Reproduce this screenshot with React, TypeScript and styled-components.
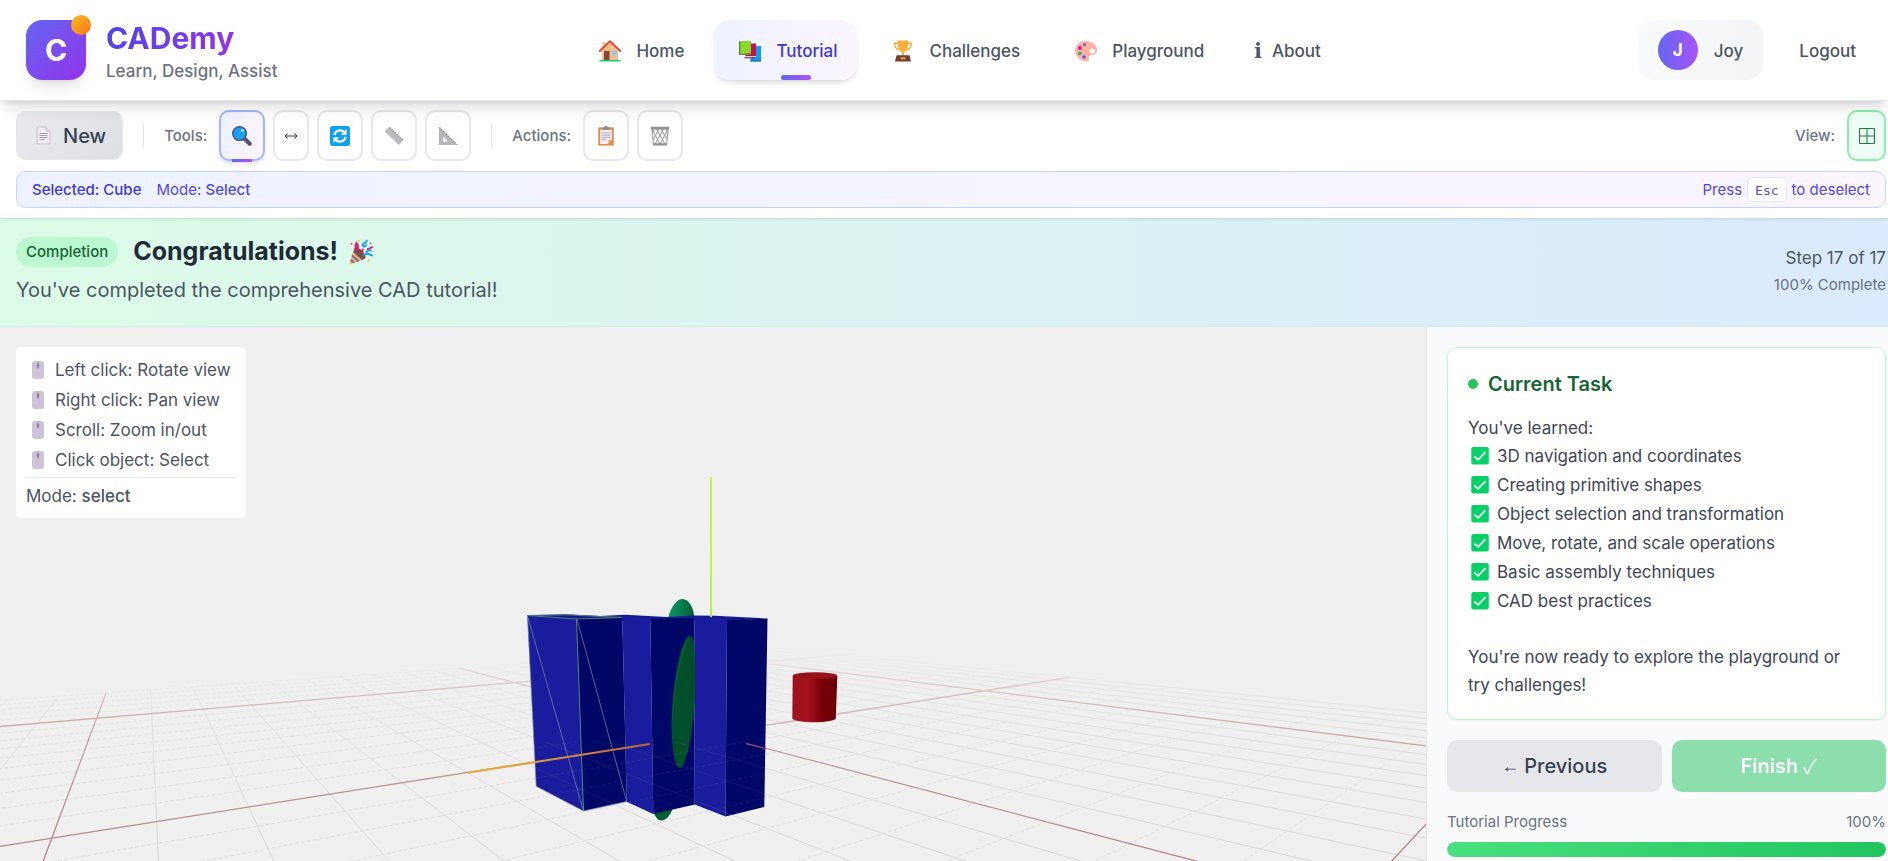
import React from 'react';
import styled, { createGlobalStyle, css } from 'styled-components';

const GlobalStyle = createGlobalStyle`
  *, *::before, *::after { box-sizing: border-box; }
  body {
    margin: 0;
    background: #ffffff;
    color: #374151;
    font-family: Inter, "Liberation Sans", sans-serif;
    font-size: 18px;
    line-height: 26px;
  }
  h1, h2, h3, p, ul { margin: 0; padding: 0; }
  ul { list-style: none; }
  button { font: inherit; color: inherit; border: 0; background: none; padding: 0; margin: 0; cursor: pointer; }
  a { color: inherit; text-decoration: none; }
  svg { display: block; flex: none; }
`;

const Page = styled.div`
  display: flex;
  flex-direction: column;
  min-height: 100vh;
`;

/* ---------- header ---------- */

const Header = styled.header`
  position: relative;
  z-index: 3;
  display: flex;
  align-items: center;
  justify-content: space-between;
  padding: 20px 12px 20px 26px;
  background: #ffffff;
  border-bottom: 1px solid #e5e7eb;
  box-shadow: 0 10px 15px -3px rgba(0, 0, 0, 0.12), 0 4px 6px -4px rgba(0, 0, 0, 0.14);
`;

const Brand = styled.a`
  display: flex;
  align-items: center;
  gap: 20px;
  height: 60px;
`;

const Logo = styled.span`
  position: relative;
  display: grid;
  place-items: center;
  width: 60px;
  height: 60px;
  border-radius: 16px;
  background: linear-gradient(135deg, #6366f1, #9333ea);
  box-shadow: 0 10px 15px -3px rgba(0, 0, 0, 0.1), 0 4px 6px -4px rgba(0, 0, 0, 0.1);
  color: #ffffff;
  font-size: 30px;
  font-weight: 700;
`;

const LogoDot = styled.span`
  position: absolute;
  top: -5px;
  right: -5px;
  width: 20px;
  height: 20px;
  border-radius: 50%;
  background: linear-gradient(135deg, #fbbf24, #f97316);
`;

const BrandText = styled.span`
  display: flex;
  flex-direction: column;
  align-items: flex-start;
  padding-top: 2px;
`;

const BrandName = styled.span`
  font-size: 30px;
  line-height: 40px;
  font-weight: 700;
  background: linear-gradient(90deg, #4f46e5, #9333ea);
  background-clip: text;
  -webkit-background-clip: text;
  color: transparent;
`;

const BrandTag = styled.span`
  color: #6b7280;
  font-size: 17px;
  font-weight: 500;
`;

const Nav = styled.nav`
  display: flex;
  gap: 10px;
`;

const NavLink = styled.a<{ $active?: boolean }>`
  position: relative;
  display: flex;
  align-items: center;
  gap: 10px;
  height: 60px;
  padding: 2px 20px 0;
  border-radius: 16px;
  font-size: 17px;
  font-weight: 500;
  color: #4b5563;
  ${(p) =>
    p.$active &&
    css`
      color: #4338ca;
      background: linear-gradient(90deg, #eef2ff, #faf5ff);
      box-shadow: 0 4px 6px -1px rgba(0, 0, 0, 0.1), 0 2px 4px -2px rgba(0, 0, 0, 0.1);
      &::after {
        content: '';
        position: absolute;
        left: 50%;
        bottom: 0;
        width: 30px;
        height: 5px;
        margin-left: -5px;
        border-radius: 3px;
        background: linear-gradient(90deg, #6366f1, #a855f7);
      }
    `}
`;

const NavIcon = styled.span`
  display: grid;
  place-items: center;
  width: 32px;
`;

const InfoGlyph = styled.span`
  font-family: "DejaVu Serif", serif;
  font-weight: 700;
  font-size: 20px;
`;

const Account = styled.div`
  display: flex;
  align-items: center;
  gap: 16px;
  font-size: 17px;
  font-weight: 500;
  color: #4b5563;
`;

const UserChip = styled.div`
  display: flex;
  align-items: center;
  gap: 16px;
  height: 60px;
  padding: 0 20px;
  border-radius: 16px;
  background: linear-gradient(90deg, #f9fafb, #f3f4f6);
`;

const UserName = styled.span`
  padding-top: 2px;
`;

const Avatar = styled.span`
  display: grid;
  place-items: center;
  width: 40px;
  height: 40px;
  border-radius: 50%;
  background: linear-gradient(90deg, #6366f1, #a855f7);
  color: #ffffff;
  font-weight: 700;
`;

const LogoutButton = styled.button`
  height: 60px;
  padding: 2px 20px 0;
  font-weight: 500;
`;

/* ---------- toolbar ---------- */

const Toolbar = styled.section`
  position: relative;
  z-index: 2;
  display: flex;
  flex-direction: column;
  gap: 10px;
  padding: 9px 2px 10px 16px;
  background: #ffffff;
  box-shadow: 0 1px 3px rgba(0, 0, 0, 0.12);
`;

const ToolRow = styled.div`
  display: flex;
  align-items: center;
  gap: 20px;
`;

const ToolGroup = styled.div<{ $end?: boolean }>`
  display: flex;
  align-items: center;
  gap: 8px;
  ${(p) => p.$end && 'margin-left: auto;'}
`;

const GroupLabel = styled.span`
  margin-right: 4px;
  font-size: 15px;
  font-weight: 500;
  color: #6b7280;
`;

const Divider = styled.span`
  width: 1px;
  height: 25px;
  background: #e2e4e8;
`;

const NewButton = styled.button`
  display: flex;
  align-items: center;
  gap: 12px;
  height: 49px;
  padding: 0 16px 0 19px;
  border-radius: 10px;
  border: 1px solid #e5e7eb;
  background: linear-gradient(135deg, #e9ebee, #dddfe4);
  font-size: 20px;
  font-weight: 500;
  color: #374151;
`;

const ToolButton = styled.button<{ $narrow?: boolean; $tone?: 'active' | 'on' }>`
  position: relative;
  display: grid;
  place-items: center;
  width: ${(p) => (p.$narrow ? '36px' : '46px')};
  height: 51px;
  border-radius: 10px;
  border: 2px solid #e5e7eb;
  background: #ffffff;
  color: #374151;
  ${(p) =>
    p.$tone === 'active' &&
    css`
      border-color: #a5b4fc;
      background: linear-gradient(90deg, #eef2ff, #faf5ff);
      box-shadow: 0 4px 6px -1px rgba(0, 0, 0, 0.1), 0 2px 4px -2px rgba(0, 0, 0, 0.1);
      &::after {
        content: '';
        position: absolute;
        left: 11px;
        bottom: -3px;
        width: 20px;
        height: 3px;
        background: linear-gradient(90deg, #6366f1, #a855f7);
      }
    `}
  ${(p) =>
    p.$tone === 'on' &&
    css`
      width: 39px;
      border-color: #86efac;
      background: linear-gradient(90deg, #f0fdf4, #ecfdf5);
      color: #15803d;
    `}
`;

const StatusBar = styled.div`
  display: flex;
  align-items: center;
  justify-content: space-between;
  height: 37px;
  padding: 0 15px;
  border: 1px solid #c7d2fe;
  border-radius: 10px;
  background: linear-gradient(90deg, #eef2ff, #faf5ff);
  font-size: 15px;
  color: #5449d3;
`;

const StatusGroup = styled.div<{ $gap: number }>`
  display: flex;
  align-items: center;
  gap: ${(p) => p.$gap}px;
`;

const Selected = styled.span`
  font-weight: 500;
  color: #4338ca;
`;

const Strong = styled.span`
  font-weight: 500;
`;

const Kbd = styled.kbd`
  display: grid;
  place-items: center;
  height: 25px;
  padding: 0 7px;
  border: 1px solid #e0e7ff;
  border-radius: 5px;
  background: #ffffff;
  font-family: "DejaVu Sans Mono", monospace;
  font-size: 13px;
`;

/* ---------- lesson banner ---------- */

const Banner = styled.section`
  display: flex;
  align-items: center;
  justify-content: space-between;
  padding: 16px 2px 21px 16px;
  border-bottom: 1px solid #d9e6e6;
  background: linear-gradient(90deg, #dcfce7, #dbeafe);
`;

const BannerHead = styled.div`
  display: flex;
  align-items: center;
  gap: 15px;
  height: 35px;
  margin-bottom: 6px;
`;

const Badge = styled.span`
  padding: 0 10px;
  border-radius: 15px;
  background: #bbf7d0;
  color: #166534;
  font-size: 15px;
  line-height: 30px;
  font-weight: 500;
`;

const BannerTitle = styled.h1`
  display: flex;
  align-items: center;
  gap: 10px;
  font-size: 25px;
  line-height: 35px;
  font-weight: 700;
  color: #1f2937;
`;

const BannerText = styled.p`
  font-size: 20px;
  line-height: 30px;
  color: #4b5563;
`;

const StepInfo = styled.div`
  padding-top: 2px;
  text-align: right;
  color: #4b5563;
`;

const StepCount = styled.p`
  font-size: 17px;
  line-height: 28px;
`;

const StepPercent = styled.p`
  font-size: 15px;
  color: #6b7280;
`;

/* ---------- workspace ---------- */

const Workspace = styled.main`
  flex: 1;
  display: grid;
  grid-template-columns: minmax(0, 1fr) 462px;
`;

const Viewer = styled.section`
  display: grid;
  background: #f0f0f0;
  & > * { grid-area: 1 / 1; }
`;

const SceneSvg = styled.svg`
  width: 100%;
  height: 100%;
  min-height: 0;
`;

const Help = styled.aside`
  position: relative;
  align-self: start;
  justify-self: start;
  min-width: 230px;
  margin: 20px 0 0 16px;
  padding: 10px 10px 9px;
  border-radius: 5px;
  background: rgba(255, 255, 255, 0.95);
  font-size: 17px;
  color: #4b5563;
`;

const HelpList = styled.ul`
  display: flex;
  flex-direction: column;
  gap: 4px;
  padding-bottom: 4px;
  margin-bottom: 5px;
  border-bottom: 1px solid #e5e7eb;
`;

const HelpItem = styled.li`
  display: flex;
  align-items: center;
  gap: 5px;
`;

const Sidebar = styled.aside`
  display: flex;
  flex-direction: column;
  gap: 20px;
  padding: 20px 2px 3px 20px;
  border-left: 1px solid #e5e7eb;
  background: #f8fafc;
`;

const Card = styled.section`
  padding: 20px;
  border: 1px solid #bbf7d0;
  border-radius: 10px;
  background: #ffffff;
  box-shadow: 0 1px 2px rgba(0, 0, 0, 0.05);
  font-size: 17px;
  line-height: 28px;
  color: #3d4655;
`;

const CardTitle = styled.h2`
  display: flex;
  align-items: center;
  gap: 10px;
  margin: 2px 0 16px;
  font-size: 20px;
  line-height: 28px;
  font-weight: 600;
  color: #166534;
  &::before {
    content: '';
    width: 10px;
    height: 10px;
    border-radius: 50%;
    background: #22c55e;
  }
`;

const Learned = styled.ul`
  display: flex;
  flex-direction: column;
  gap: 1px;
  margin-bottom: 28px;
`;

const LearnedItem = styled.li`
  display: flex;
  align-items: center;
  gap: 5px;
`;

const StepButtons = styled.div`
  display: grid;
  grid-template-columns: 1fr 1fr;
  gap: 10px;
`;

const StepButton = styled.button<{ $primary?: boolean }>`
  display: flex;
  align-items: center;
  justify-content: center;
  gap: 5px;
  height: 52px;
  border-radius: 10px;
  font-size: 20px;
  font-weight: ${(p) => (p.$primary ? 600 : 500)};
  background: ${(p) => (p.$primary ? '#22c55e' : '#e5e7eb')};
  color: ${(p) => (p.$primary ? '#ffffff' : '#374151')};
  &:disabled { opacity: 0.5; cursor: not-allowed; }
`;

const Glyph = styled.span<{ $cjk?: boolean }>`
  font-family: ${(p) => (p.$cjk ? '"Noto Sans CJK JP", "DejaVu Sans", sans-serif' : '"Liberation Sans", sans-serif')};
  font-size: ${(p) => (p.$cjk ? '20px' : '18px')};
  font-weight: 400;
`;

const Progress = styled.div`
  display: flex;
  flex-direction: column;
  gap: 10px;
  font-size: 15px;
  line-height: 20px;
  color: #6b7280;
`;

const ProgressLabels = styled.div`
  display: flex;
  justify-content: space-between;
`;

const Track = styled.div`
  height: 15px;
  border-radius: 8px;
  background: #e5e7eb;
  overflow: hidden;
`;

const Fill = styled.div`
  height: 100%;
  border-radius: 8px;
  background: linear-gradient(90deg, #4ade80, #22c55e);
`;

/* ---------- icons ---------- */

const Icon = ({ size = 22, children }: { size?: number; children: React.ReactNode }) => (
  <svg width={size} height={size} viewBox="0 0 22 22" aria-hidden="true">{children}</svg>
);

const HouseIcon = () => (
  <Icon>
    <path d="M3.5 2h3v6h-3z" fill="#f2c28b" />
    <path d="M3 10.5 11 3l8 7.500V20H3z" fill="#f5bf86" />
    <path d="M.8 11 11 1.300 21.200 11" fill="none" stroke="#ee4136" strokeWidth="2" strokeLinecap="round" strokeLinejoin="round" />
    <path d="M5 11h5.500v9H5z" fill="#7d4a3b" />
    <path d="M13 10.500h4.500v5H13z" fill="#8fc9f5" />
    <path d="M.5 20h21v1.500H.5z" fill="#0fd07c" />
  </Icon>
);

const BooksIcon = () => (
  <Icon>
    <path d="M13 6h9v15.500H11.500V19.500z" fill="#0e9df0" />
    <path d="M11.500 19.500H22v2H11.500z" fill="#1f7fc4" />
    <path d="M8 3.500h9v12.500H6.500z" fill="#c4114c" />
    <path d="M5.500 16H17v1.500H5.500z" fill="#dccfe0" />
    <path d="M5.500 17.300h11v1h-11z" fill="#8e1040" />
    <path d="M1 1h11v12.500H1z" fill="#8bd62c" />
    <path d="M0 1.500h1.300V15H0z" fill="#4c8a20" />
    <path d="M.6 13.500H12V15H.6z" fill="#5c8f3a" />
  </Icon>
);

const TrophyIcon = () => (
  <Icon>
    <path d="M6 3.200H2.800c0 4 1.500 6.300 4.700 6.600M16 3.200h3.200c0 4-1.500 6.300-4.700 6.600" fill="none" stroke="#f0a638" strokeWidth="1.400" />
    <path d="M5.500.5h11c0 7-1.200 10.500-4.300 11.500v4H9.800v-4C6.700 11 5.500 7.500 5.500.5z" fill="#fbb03b" />
    <path d="M4.500 15.200h13l1.500 6.300H3z" fill="#6f4136" />
    <path d="M8.500 17.300h5v2h-5z" fill="#f3a928" />
  </Icon>
);

const PaletteIcon = () => (
  <Icon>
    <path
      fillRule="evenodd"
      fill="#fbb3a8"
      d="M11 1C4.500 1-.5 5.800.2 11.500.8 17 5.500 21.500 12 21.500c2.500 0 2.500-1.700 1.900-3-.7-1.700.2-3 2.500-3.200 3.500-.3 5.600-1.800 5.600-5C22 4.500 17 1 11 1zm6.300 7.400a2.700 2.500 0 1 1 0 5 2.700 2.500 0 0 1 0-5z"
    />
    <circle cx="9.500" cy="4.800" r="1.800" fill="#8f6bb0" />
    <circle cx="5" cy="8" r="1.900" fill="#e3128a" />
    <circle cx="4.800" cy="13.300" r="1.900" fill="#3fb559" />
    <circle cx="9" cy="17" r="1.800" fill="#6a56d6" />
  </Icon>
);

const PageIcon = () => (
  <svg width="15" height="19" viewBox="0 0 15 19" aria-hidden="true">
    <path d="M1 1h9l4 4v13H1z" fill="#f0ebf2" stroke="#cdbfd2" />
    <path d="M10 1v4h4" fill="#e2d8e6" stroke="#cdbfd2" />
    <path d="M3.500 7.500h8M3.500 9.500h8M3.500 11.500h8M3.500 13.500h5" stroke="#ab9fb2" />
  </svg>
);

const SearchIcon = () => (
  <Icon size={20}>
    <path d="m14.500 14.500 5 5" stroke="#5f4f83" strokeWidth="4.500" strokeLinecap="round" />
    <path d="m12.500 12.500 2.500 2.500" stroke="#5f4f83" strokeWidth="2" />
    <circle cx="8.300" cy="8.300" r="7.500" fill="#17a3f2" stroke="#49508f" strokeWidth="1.600" />
    <ellipse cx="11.500" cy="5" rx="1.600" ry="1.400" fill="#c9ecff" />
  </Icon>
);

const MoveIcon = () => (
  <svg width="14" height="8" viewBox="0 0 14 8" fill="none" stroke="#303846" strokeWidth="1" aria-hidden="true">
    <path d="M1 4h12M3.500 1.500 1 4l2.500 2.500M10.500 1.500 13 4l-2.500 2.500" />
  </svg>
);

const RotateIcon = () => (
  <Icon size={20}>
    <rect width="22" height="22" rx="2.500" fill="#0fa1ea" />
    <path d="M4.800 10a6.300 6.300 0 0 1 10.500-3.500M17.200 12a6.300 6.300 0 0 1-10.500 3.500" fill="none" stroke="#ffffff" strokeWidth="2.400" />
    <path d="M12 9.500h6.200V3.300zM10 12.500H3.800v6.200z" fill="#ffffff" />
  </Icon>
);

const RulerIcon = () => (
  <Icon size={20}>
    <path d="M5.500.8 21.300 15.800l-5 5.200L.7 6z" fill="#bcbcc0" />
    <path d="M6.500 1.800 21 15.500" stroke="#77777f" strokeWidth="1.400" strokeDasharray="1.200 1.400" />
  </Icon>
);

const TriangleIcon = () => (
  <Icon size={20}>
    <path fillRule="evenodd" d="M1 .8 21.300 21H1zM5.500 11.500V17H11z" fill="#b7b7bb" />
    <path d="M1.800 1.800 20.800 20.500" stroke="#74747c" strokeWidth="1.400" strokeDasharray="1.200 1.400" />
  </Icon>
);

const ClipboardIcon = () => (
  <Icon size={20}>
    <path d="M2.500 1.500h17v20h-17z" fill="#e18a48" />
    <path d="M4.500 4h13v11l-4.500 4.700H4.500z" fill="#f6eef8" />
    <path d="M13 19.700V15h4.500z" fill="#f0b07e" />
    <path d="M7.500 1h2a1.500 1.500 0 0 1 3 0h2v3.300h-7z" fill="#8c8b90" />
    <path d="M6 7.500h10M6 10h10M6 12.500h10M6 15h5" stroke="#a59cae" strokeWidth="1" />
  </Icon>
);

const TrashIcon = () => (
  <Icon size={20}>
    <path d="M2 3h18l-1.700 17H3.700z" fill="#f4f4f5" />
    <path
      d="M2.500 4 11 20M7 3l9.500 17M12 3l7 12M17 3l3 5M19.500 4 11 20M15 3 5.500 20M10 3 3.500 15M5 3 2.500 8M2 3l1.700 17M20 3l-1.700 17"
      stroke="#9c9ca0"
      strokeWidth="1.100"
      fill="none"
    />
    <path d="M.8.8h20.400v3H.8zM3.200 19h15.600v2.500H3.200z" fill="#919194" />
  </Icon>
);

const GridIcon = () => (
  <svg width="16" height="16" viewBox="0 0 16 16" fill="none" stroke="currentColor" aria-hidden="true">
    <path d="M.5.5h15v15H.5zM8 .5v15M.5 8h15" />
  </svg>
);

const PartyIcon = () => (
  <Icon size={26}>
    <path d="m5.500 7.500 9.500 9.200L1 21.500z" fill="#f6b23e" />
    <path d="m4.600 10.300 8 7.300M3.400 14l5.500 5M2.300 17.500l3 2.600" stroke="#7168c9" strokeWidth="1.700" />
    <ellipse cx="10" cy="12" rx="2.800" ry="6.200" transform="rotate(-45 10 12)" fill="#7d4a3b" />
    <path d="M7.500 9.500C6 7 6 5 7.200 3.500c1.300 2 1.600 4 .8 6M12 12c-.5-1.500 0-2.500 1-3.500" fill="none" stroke="#dc1f7d" strokeWidth="1.800" />
    <path d="M15.500.8c1.500 3-3.500 2-3 4.500.3 1.700 3 1.200 2.600-.8M12.500 14c3-2 5-1.500 8.500.3M15 11.500c1-1.500 3-2.500 5-1.500" fill="none" stroke="#1aa4ee" strokeWidth="1.700" />
    <path d="M16 8.500c2-.3 3.500-1 5-2" stroke="#dc1f7d" strokeWidth="1.500" fill="none" />
    <circle cx="3" cy="4" r=".9" fill="#e9488f" />
    <circle cx="9" cy="1.500" r=".8" fill="#f6b23e" />
    <circle cx="19" cy="3.500" r=".8" fill="#e9488f" />
    <circle cx="17.500" cy="18" r=".8" fill="#f6b23e" />
  </Icon>
);

const MouseIcon = () => (
  <svg width="24" height="18" viewBox="0 0 24 18" aria-hidden="true">
    <rect x="6" width="12" height="18" rx="3" fill="#cdc2d8" />
    <ellipse cx="12" cy="4.500" rx="1.300" ry="2.600" fill="#84789a" />
    <path d="M12 0v8" stroke="#a99cb8" strokeWidth=".6" />
  </svg>
);

const CheckIcon = () => (
  <svg width="24" height="18" viewBox="0 0 24 18" aria-hidden="true">
    <rect x="3.300" width="17.500" height="17.500" rx="2" fill="#08d068" />
    <path d="m6.500 9.500 3.600 3.300 7.400-7.600" fill="none" stroke="#f2fff8" strokeWidth="1.700" />
  </svg>
);

/* ---------- 3D scene ---------- */

// Ground plane projection: one section is ten cells, the plane spans 1.5 sections each way.
const HORIZON = 586;
const ORIGIN = { x: 711, y: 734 };
const VANISH_U = 1648;
const VANISH_V = 146;
const STEP_U = 0.413;
const STEP_V = 0.532;
const EXTENT = 15;

const depth = (u: number, v: number) => 1 + STEP_U * u + STEP_V * v;

const project = (u: number, v: number) => {
  const d = depth(u, v);
  const x = (ORIGIN.x + STEP_U * u * VANISH_U + STEP_V * v * VANISH_V) / d;
  const y = HORIZON + (ORIGIN.y - HORIZON) / d;
  return `${x.toFixed(1)} ${y.toFixed(1)}`;
};

const NEAR = 0.3;
const lineU = (u: number) => {
  const start = Math.max(-1.5, (NEAR - 1 - STEP_U * u) / STEP_V);
  return `M${project(u, start)}L${project(u, 1.5)}`;
};
const lineV = (v: number) => {
  const start = Math.max(-1.5, (NEAR - 1 - STEP_V * v) / STEP_U);
  return `M${project(start, v)}L${project(1.5, v)}`;
};

const ticks = Array.from({ length: EXTENT * 2 + 1 }, (_, i) => i - EXTENT);
const cells = ticks.filter((t) => t % 10 !== 0);
const sections = ticks.filter((t) => t % 10 === 0);
const cellPathU = cells.map((t) => lineU(t / 10)).join('');
const cellPathV = cells.map((t) => lineV(t / 10)).join('');
const sectionPath = sections.map((t) => lineU(t / 10) + lineV(t / 10)).join('');

const Scene = () => (
  <SceneSvg viewBox="0 327 1426 534" preserveAspectRatio="xMidYMid slice" role="img" aria-label="3D scene">
    <defs>
      <linearGradient id="fade" gradientUnits="userSpaceOnUse" x1="0" y1="655" x2="0" y2="861">
        <stop offset="0" stopColor="#fff" stopOpacity="0.05" />
        <stop offset="0.1" stopColor="#fff" stopOpacity="0.3" />
        <stop offset="0.4" stopColor="#fff" stopOpacity="0.7" />
        <stop offset="1" stopColor="#fff" />
      </linearGradient>
      <mask id="fog" maskUnits="userSpaceOnUse" x="0" y="640" width="1427" height="221">
        <rect x="0" y="640" width="1427" height="221" fill="url(#fade)" />
      </mask>
      <linearGradient id="axisX" gradientUnits="userSpaceOnUse" x1="468" y1="0" x2="650" y2="0">
        <stop offset="0" stopColor="#e8b23a" />
        <stop offset="0.4" stopColor="#dc9a3c" />
        <stop offset="1" stopColor="#b9603a" />
      </linearGradient>
      <linearGradient id="axisY" gradientUnits="userSpaceOnUse" x1="0" y1="477" x2="0" y2="617">
        <stop offset="0" stopColor="#cdf04c" />
        <stop offset="1" stopColor="#aef74a" />
      </linearGradient>
      <linearGradient id="cone" x1="0" y1="0" x2="1" y2="0">
        <stop offset="0" stopColor="#0d9566" />
        <stop offset="0.5" stopColor="#078052" />
        <stop offset="1" stopColor="#005a30" />
      </linearGradient>
      <linearGradient id="drum" x1="0" y1="0" x2="1" y2="0">
        <stop offset="0" stopColor="#9e121d" />
        <stop offset="0.35" stopColor="#a3121d" />
        <stop offset="0.7" stopColor="#730009" />
        <stop offset="1" stopColor="#6a0008" />
      </linearGradient>
      <clipPath id="blocks">
        <path d="M530 742H766L764.300 807 725.500 816.500 694.700 804.500 653.300 814 626.700 801.500 583.500 811 536 786z" />
      </clipPath>
    </defs>

    <rect x="0" y="327" width="1427" height="534" fill="#f0f0f0" />

    <g mask="url(#fog)" fill="none">
      <path d={cellPathU} stroke="#d6d6d8" />
      <path d={cellPathV} stroke="#dbdbdd" strokeDasharray="4 2" />
      <path d={sectionPath} stroke="#b58083" strokeWidth="1.300" />
    </g>

    {/* cylinder */}
    <path d="M792.700 676 837.300 676 835.800 718.500C832 723.500 796 723.500 792.300 718.500z" fill="url(#drum)" />
    <ellipse cx="815" cy="675.500" rx="22.300" ry="3.200" fill="#98111b" />

    {/* green spheroid above and below the blocks */}
    <path d="M667.700 619C671 606 677 599 682.500 599 689 599 694 608 694.300 619z" fill="url(#cone)" />
    <path d="M653.600 812C656 819 659 820.500 661.500 820.500 666 820.500 670.500 815 673 808z" fill="#005c31" />

    {/* blocks */}
    <path d="M527.300 615.300 566 614.300 600 616 625 614.800 667 617 694 615.500 715 615.800 767.500 618.500 727 621 694 621 650 621 576 620z" fill="#17198f" />
    <path d="M527.300 615.500 576.500 618.700 583.500 811 536.200 786.300z" fill="#1a1c9e" />
    <path d="M576.500 618.700 622.300 617.500 626.800 801.500 583.500 811z" fill="#000766" />
    <path d="M622.300 616 650.300 619 653.300 814 626.700 801.800z" fill="#1a1c9e" />
    <path d="M650.300 619 694.200 618 694.800 804.500 653.300 814z" fill="#000766" />
    <path d="M694.200 616 727 619.500 725.500 816.500 694.700 804.500z" fill="#1a1c9e" />
    <path d="M727 620 767.500 618.500 764.300 807 725.500 816.500z" fill="#000766" />
    <path
      d="M690.300 635.500C680 637 672 690 671.500 720 671 752 676 768 679.500 768 686 768 692.500 735 694.800 700 695.800 670 695.500 637 690.300 635.500z"
      fill="#004f2a"
    />
    <path d="M690 636C681 642 673 690 672.200 722 675 690 680 655 690 636z" fill="#0a6138" />

    {/* wireframe of the selected cube */}
    <path
      d="M527.500 615.500 576.500 619 622 617.500 566 614.800zM576.500 618.700 583.500 811"
      fill="none"
      stroke="#4f7f74"
      strokeWidth="1"
    />
    <path d="M527.500 616 583.500 811M577 619 626.700 801.500M527.500 616 536.200 786.300 583.500 811 626.700 801.500" fill="none" stroke="#7d8c9c" strokeWidth=".7" />

    <g clipPath="url(#blocks)" fill="none" opacity="0.09">
      <path d={cellPathU} stroke="#d6d6d8" />
      <path d={cellPathV} stroke="#d9d9db" strokeDasharray="4 2" />
    </g>

    {/* axes */}
    <path d="M711 477V617" stroke="url(#axisY)" strokeWidth="2" />
    <path d="M468 772.700 649.700 744" stroke="url(#axisX)" strokeWidth="2" />
    <path d="M746 743.500 766 748.600" stroke="#8d4a72" strokeWidth="1.300" />
  </SceneSvg>
);

/* ---------- data ---------- */

const navItems = [
  { label: 'Home', icon: <HouseIcon /> },
  { label: 'Tutorial', icon: <BooksIcon />, active: true },
  { label: 'Challenges', icon: <TrophyIcon /> },
  { label: 'Playground', icon: <PaletteIcon /> },
];

const helpItems = ['Left click: Rotate view', 'Right click: Pan view', 'Scroll: Zoom in/out', 'Click object: Select'];

const learned = [
  '3D navigation and coordinates',
  'Creating primitive shapes',
  'Object selection and transformation',
  'Move, rotate, and scale operations',
  'Basic assembly techniques',
  'CAD best practices',
];

export default function App() {
  const progress = 100;
  return (
    <Page>
      <GlobalStyle />
      <Header>
        <Brand href="#home">
          <Logo>C<LogoDot /></Logo>
          <BrandText>
            <BrandName>CADemy</BrandName>
            <BrandTag>Learn, Design, Assist</BrandTag>
          </BrandText>
        </Brand>
        <Nav>
          {navItems.map((item) => (
            <NavLink key={item.label} href={`#${item.label.toLowerCase()}`} $active={item.active}>
              <NavIcon>{item.icon}</NavIcon>
              {item.label}
            </NavLink>
          ))}
          <NavLink href="#about">
            <InfoGlyph>i</InfoGlyph>
            About
          </NavLink>
        </Nav>
        <Account>
          <UserChip>
            <Avatar>J</Avatar>
            <UserName>Joy</UserName>
          </UserChip>
          <LogoutButton type="button">Logout</LogoutButton>
        </Account>
      </Header>

      <Toolbar>
        <ToolRow>
          <NewButton type="button"><PageIcon />New</NewButton>
          <Divider />
          <ToolGroup>
            <GroupLabel>Tools:</GroupLabel>
            <ToolButton type="button" aria-label="Select" $tone="active"><SearchIcon /></ToolButton>
            <ToolButton type="button" aria-label="Move" $narrow><MoveIcon /></ToolButton>
            <ToolButton type="button" aria-label="Rotate"><RotateIcon /></ToolButton>
            <ToolButton type="button" aria-label="Scale"><RulerIcon /></ToolButton>
            <ToolButton type="button" aria-label="Measure"><TriangleIcon /></ToolButton>
          </ToolGroup>
          <Divider />
          <ToolGroup>
            <GroupLabel>Actions:</GroupLabel>
            <ToolButton type="button" aria-label="Copy"><ClipboardIcon /></ToolButton>
            <ToolButton type="button" aria-label="Delete"><TrashIcon /></ToolButton>
          </ToolGroup>
          <ToolGroup $end>
            <GroupLabel>View:</GroupLabel>
            <ToolButton type="button" aria-label="Toggle grid" $tone="on"><GridIcon /></ToolButton>
          </ToolGroup>
        </ToolRow>
        <StatusBar>
          <StatusGroup $gap={15}>
            <Selected>Selected: Cube</Selected>
            <span>Mode: <Strong>Select</Strong></span>
          </StatusGroup>
          <StatusGroup $gap={5}>
            <span>Press</span>
            <Kbd>Esc</Kbd>
            <span>to deselect</span>
          </StatusGroup>
        </StatusBar>
      </Toolbar>

      <Banner>
        <div>
          <BannerHead>
            <Badge>Completion</Badge>
            <BannerTitle>Congratulations! <PartyIcon /></BannerTitle>
          </BannerHead>
          <BannerText>You've completed the comprehensive CAD tutorial!</BannerText>
        </div>
        <StepInfo>
          <StepCount>Step 17 of 17</StepCount>
          <StepPercent>100% Complete</StepPercent>
        </StepInfo>
      </Banner>

      <Workspace>
        <Viewer>
          <Scene />
          <Help>
            <HelpList>
              {helpItems.map((text) => (
                <HelpItem key={text}><MouseIcon />{text}</HelpItem>
              ))}
            </HelpList>
            <p>Mode: <Strong>select</Strong></p>
          </Help>
        </Viewer>

        <Sidebar>
          <Card>
            <CardTitle>Current Task</CardTitle>
            <p>You've learned:</p>
            <Learned>
              {learned.map((text) => (
                <LearnedItem key={text}><CheckIcon />{text}</LearnedItem>
              ))}
            </Learned>
            <p>You're now ready to explore the playground or try challenges!</p>
          </Card>
          <StepButtons>
            <StepButton type="button"><Glyph>←</Glyph>Previous</StepButton>
            <StepButton type="button" $primary disabled>Finish<Glyph $cjk>✓</Glyph></StepButton>
          </StepButtons>
          <Progress>
            <ProgressLabels>
              <span>Tutorial Progress</span>
              <span>{progress}%</span>
            </ProgressLabels>
            <Track role="progressbar" aria-label="Tutorial Progress" aria-valuenow={progress}>
              <Fill style={{ width: `${progress}%` }} />
            </Track>
          </Progress>
        </Sidebar>
      </Workspace>
    </Page>
  );
}
